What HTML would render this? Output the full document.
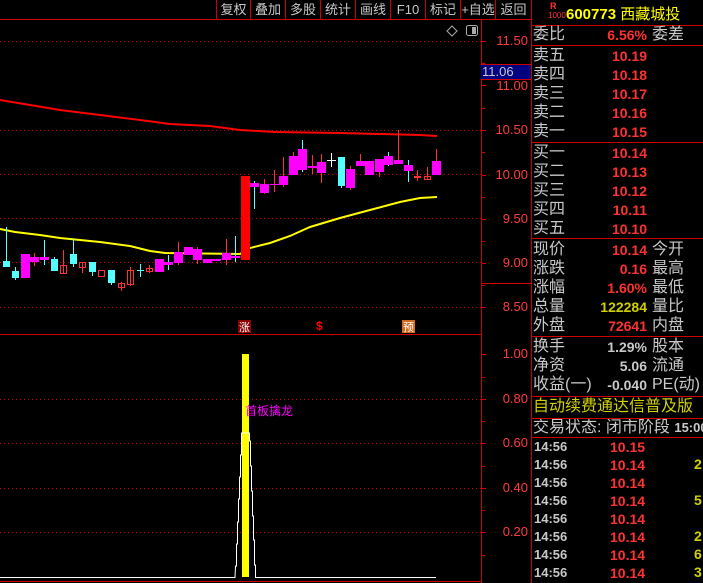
<!DOCTYPE html>
<html><head><meta charset="utf-8"><style>
*{margin:0;padding:0;box-sizing:border-box}
body{width:703px;height:583px;background:#000;overflow:hidden;position:relative;font-family:"Liberation Sans","Noto Sans CJK SC",sans-serif}
.a{position:absolute;white-space:nowrap}
.btn{position:absolute;top:0;height:19px;color:#c8c8c8;font-size:13px;line-height:19px;text-align:center;border-left:1px solid #c00}
.ax{position:absolute;right:175px;color:#ff3c3c;font-size:13px;line-height:14px}
.r{position:absolute;left:533px;font-size:16px;line-height:18px;color:#c8c8c8;white-space:nowrap}
.v{position:absolute;right:56px;font-size:14px;line-height:18px;color:#ff3232;font-weight:bold;text-align:right;white-space:nowrap}
.l2{position:absolute;left:652px;font-size:16px;line-height:18px;color:#c8c8c8;white-space:nowrap}
.hl{position:absolute;left:531px;width:172px;height:1px;background:#c00}
.t{position:absolute;left:534px;font-size:13px;font-weight:bold;color:#c8c8c8;line-height:18px}
.tv{position:absolute;left:610px;font-size:14px;font-weight:bold;color:#ff3232;line-height:18px}
</style></head><body>
<svg class="a" style="left:0;top:0" width="703" height="583">
<g stroke="#c00" stroke-width="1" fill="none">
<line x1="0" y1="19.5" x2="531" y2="19.5"/>
<line x1="481.5" y1="20" x2="481.5" y2="583"/>
<line x1="531.5" y1="0" x2="531.5" y2="583"/>
<line x1="0" y1="334.5" x2="481" y2="334.5"/>
<line x1="481" y1="283.5" x2="531" y2="283.5"/>
<line x1="0" y1="581.5" x2="481" y2="581.5"/>
<g stroke-dasharray="1,3">
<line x1="0" y1="41.5" x2="481" y2="41.5"/><line x1="0" y1="130.5" x2="481" y2="130.5"/>
<line x1="0" y1="174.5" x2="481" y2="174.5"/><line x1="0" y1="218.5" x2="481" y2="218.5"/>
<line x1="0" y1="262.5" x2="481" y2="262.5"/><line x1="0" y1="307.5" x2="481" y2="307.5"/>
<line x1="0" y1="399.5" x2="481" y2="399.5"/><line x1="0" y1="443.5" x2="481" y2="443.5"/>
<line x1="0" y1="488.5" x2="481" y2="488.5"/><line x1="0" y1="532.5" x2="481" y2="532.5"/>
</g>
<path d="M482 41.5h4M482 63.5h3M482 85.5h4M482 108.5h3M482 130.5h4M482 152.5h3M482 175.5h4M482 197.5h3M482 219.5h4M482 241.5h3M482 263.5h4M482 285.5h3M482 307.5h4M482 354.5h4M482 377.5h3M482 399.5h4M482 421.5h3M482 443.5h4M482 466.5h3M482 488.5h4M482 510.5h3M482 532.5h4M482 555.5h3"/>
</g>
<polyline fill="none" stroke="#f00" stroke-width="2" points="0,100 60,110 140,120 170,124 210,126 240,130 275,132 340,133 380,134 420,135 437,136"/>
<polyline fill="none" stroke="#ff0" stroke-width="2" points="0,229 15,232 40,235 60,238 100,242 130,246 150,251 165,253 240,254 250,248 270,243 290,236 310,227 340,218 370,210 400,202 420,198 437,197"/>
<g stroke-width="1">
<g stroke="#55ffff"><line x1="6.5" y1="227" x2="6.5" y2="267"/><line x1="15.5" y1="267" x2="15.5" y2="280"/><line x1="44.5" y1="240" x2="44.5" y2="265"/><line x1="54.5" y1="257" x2="54.5" y2="271"/><line x1="73.5" y1="239" x2="73.5" y2="267"/><line x1="92.5" y1="262" x2="92.5" y2="276"/><line x1="111.5" y1="270" x2="111.5" y2="285"/><line x1="140.5" y1="264" x2="140.5" y2="277"/><line x1="168.5" y1="255" x2="168.5" y2="270"/><line x1="235.5" y1="236" x2="235.5" y2="262"/><line x1="254.5" y1="181" x2="254.5" y2="209"/><line x1="302.5" y1="140" x2="302.5" y2="172"/><line x1="341.5" y1="157" x2="341.5" y2="188"/><line x1="388.5" y1="152" x2="388.5" y2="166"/><line x1="408.5" y1="160" x2="408.5" y2="182"/></g>
<g stroke="#ff3232"><line x1="34.5" y1="253" x2="34.5" y2="266"/><line x1="63.5" y1="250" x2="63.5" y2="274"/><line x1="82.5" y1="262" x2="82.5" y2="273"/><line x1="121.5" y1="282" x2="121.5" y2="291"/><line x1="130.5" y1="267" x2="130.5" y2="286"/><line x1="149.5" y1="265" x2="149.5" y2="273"/><line x1="178.5" y1="242" x2="178.5" y2="265"/><line x1="197.5" y1="247" x2="197.5" y2="264"/><line x1="226.5" y1="239" x2="226.5" y2="265"/><line x1="264.5" y1="179" x2="264.5" y2="194"/><line x1="274.5" y1="170" x2="274.5" y2="192"/><line x1="283.5" y1="157" x2="283.5" y2="187"/><line x1="293.5" y1="152" x2="293.5" y2="175"/><line x1="312.5" y1="155" x2="312.5" y2="174"/><line x1="321.5" y1="154" x2="321.5" y2="183"/><line x1="350.5" y1="166" x2="350.5" y2="190"/><line x1="360.5" y1="154" x2="360.5" y2="166"/><line x1="379.5" y1="159" x2="379.5" y2="177"/><line x1="398.5" y1="130" x2="398.5" y2="164"/><line x1="417.5" y1="170" x2="417.5" y2="181"/><line x1="427.5" y1="167" x2="427.5" y2="179"/><line x1="436.5" y1="149" x2="436.5" y2="175"/></g>
<line x1="331.5" y1="153" x2="331.5" y2="167" stroke="#fff"/><line x1="327" y1="160.5" x2="336" y2="160.5" stroke="#fff"/>
</g>
<g fill="#55ffff"><rect x="3" y="261" width="7" height="6"/><rect x="12" y="271" width="7" height="7"/><rect x="51" y="259" width="7" height="12"/><rect x="70" y="254" width="7" height="10"/><rect x="89" y="262" width="7" height="10"/><rect x="108" y="270" width="7" height="13"/><rect x="137" y="270" width="7" height="1"/><rect x="338" y="157" width="7" height="29"/></g>
<g fill="none" stroke="#ff3232"><rect x="60.5" y="265.5" width="6" height="8"/><rect x="79.5" y="262.5" width="6" height="5"/><rect x="98.5" y="270.5" width="6" height="6"/><rect x="118.5" y="283.5" width="6" height="4"/><rect x="127.5" y="270.5" width="6" height="14"/><rect x="146.5" y="268.5" width="6" height="3"/><rect x="424.5" y="176.5" width="6" height="3"/></g>
<rect x="414" y="176" width="7" height="2" fill="#ff3232"/>
<g fill="#ff00ff"><rect x="21" y="254" width="9" height="24"/><rect x="30" y="257" width="9" height="5"/><rect x="40" y="257" width="9" height="3"/><rect x="155" y="259" width="9" height="13"/><rect x="164" y="262" width="9" height="3"/><rect x="174" y="252" width="9" height="11"/><rect x="184" y="247" width="9" height="8"/><rect x="193" y="249" width="9" height="11"/><rect x="203" y="259" width="9" height="4"/><rect x="212" y="259" width="9" height="2"/><rect x="222" y="253" width="9" height="7"/><rect x="231" y="256" width="9" height="2"/><rect x="250" y="183" width="9" height="4"/><rect x="260" y="184" width="9" height="9"/><rect x="270" y="184" width="9" height="1"/><rect x="279" y="176" width="9" height="9"/><rect x="289" y="156" width="9" height="19"/><rect x="298" y="149" width="9" height="21"/><rect x="308" y="166" width="9" height="2"/><rect x="317" y="162" width="9" height="11"/><rect x="346" y="169" width="9" height="19"/><rect x="356" y="161" width="9" height="5"/><rect x="365" y="161" width="9" height="14"/><rect x="375" y="159" width="9" height="13"/><rect x="384" y="156" width="9" height="9"/><rect x="394" y="160" width="9" height="4"/><rect x="404" y="165" width="9" height="6"/><rect x="432" y="161" width="9" height="14"/></g>
<rect x="241" y="176" width="9" height="84" fill="#f00"/>
<rect x="238" y="320" width="13" height="13" fill="#8b0000"/>
<rect x="402" y="320" width="13" height="13" fill="#d2691e"/>
<rect x="242" y="354" width="7" height="223" fill="#ff0"/>
<polyline fill="none" stroke="#fff" stroke-width="1" points="0,577.5 235,577.5 235.5,566 236.5,566 236.5,544 237.5,544 237.5,522 238.5,522 238.5,499 239.5,499 239.5,477 240.5,477 240.5,455 241.5,455 241.5,433 249.5,433 249.5,441 250.5,441 250.5,466 251.5,466 251.5,491 252.5,491 252.5,516 253.5,516 253.5,540 254.5,540 254.5,565 255.5,565 255.5,577.5 436,577.5"/>
<path d="M452 26l5 5-5 5-5-5z" fill="none" stroke="#aaa"/>
<rect x="466.5" y="25.5" width="11" height="10" rx="2" fill="none" stroke="#aaa"/><rect x="472" y="27" width="4" height="7" fill="#aaa"/>
<g stroke="#c00"><line x1="531" y1="25.5" x2="703" y2="25.5"/></g>
</svg>
<div class="a" style="left:239px;top:319px;font-size:11px;color:#fff">涨</div>
<div class="a" style="left:316px;top:319px;font-size:12px;color:#f00;font-weight:bold">$</div>
<div class="a" style="left:403px;top:319px;font-size:11px;color:#fff">预</div>
<div class="a" style="left:245px;top:402px;font-size:12px;color:#ff00ff">首板擒龙</div>
<div class="btn" style="left:216px;width:34px">复权</div><div class="btn" style="left:250px;width:35px">叠加</div><div class="btn" style="left:285px;width:35px">多股</div><div class="btn" style="left:320px;width:35px">统计</div><div class="btn" style="left:355px;width:35px">画线</div><div class="btn" style="left:390px;width:35px">F10</div><div class="btn" style="left:425px;width:35px">标记</div><div class="btn" style="left:460px;width:35px">+自选</div><div class="btn" style="left:495px;width:36px">返回</div>
<div class="ax" style="top:34px">11.50</div><div class="ax" style="top:79px">11.00</div><div class="ax" style="top:123px">10.50</div><div class="ax" style="top:168px">10.00</div><div class="ax" style="top:212px">9.50</div><div class="ax" style="top:256px">9.00</div><div class="ax" style="top:300px">8.50</div>
<div class="ax" style="top:347px">1.00</div><div class="ax" style="top:392px">0.80</div><div class="ax" style="top:436px">0.60</div><div class="ax" style="top:481px">0.40</div><div class="ax" style="top:525px">0.20</div>
<div class="a" style="left:481px;top:64px;width:50px;height:16px;background:#000080;border-top:1px solid #c00;border-bottom:1px solid #c00;color:#c8c8c8;font-size:13px;line-height:14px;padding-left:1px">11.06</div>
<div class="a" style="left:550px;top:1px;font-size:9px;color:#ff3232;font-weight:bold">R</div>
<div class="a" style="left:548px;top:11px;font-size:8px;color:#ff3232">1000</div>
<div class="a" style="left:566px;top:3px;font-size:15px;color:#ff0;font-weight:bold">600773 <span style="font-weight:normal">西藏城投</span></div>
<div class="r" style="top:26px">委比</div><div class="v" style="top:26px">6.56%</div><div class="l2" style="top:26px">委差</div>
<div class="hl" style="top:45px"></div>
<div class="r" style="top:47px">卖五</div><div class="v" style="top:47px">10.19</div>
<div class="r" style="top:66px">卖四</div><div class="v" style="top:66px">10.18</div>
<div class="r" style="top:85px">卖三</div><div class="v" style="top:85px">10.17</div>
<div class="r" style="top:104px">卖二</div><div class="v" style="top:104px">10.16</div>
<div class="r" style="top:123px">卖一</div><div class="v" style="top:123px">10.15</div>
<div class="hl" style="top:142px"></div>
<div class="r" style="top:144px">买一</div><div class="v" style="top:144px">10.14</div>
<div class="r" style="top:163px">买二</div><div class="v" style="top:163px">10.13</div>
<div class="r" style="top:182px">买三</div><div class="v" style="top:182px">10.12</div>
<div class="r" style="top:201px">买四</div><div class="v" style="top:201px">10.11</div>
<div class="r" style="top:220px">买五</div><div class="v" style="top:220px">10.10</div>
<div class="hl" style="top:238px"></div>
<div class="r" style="top:241px">现价</div><div class="v" style="top:241px">10.14</div><div class="l2" style="top:241px">今开</div>
<div class="r" style="top:260px">涨跌</div><div class="v" style="top:260px">0.16</div><div class="l2" style="top:260px">最高</div>
<div class="r" style="top:279px">涨幅</div><div class="v" style="top:279px">1.60%</div><div class="l2" style="top:279px">最低</div>
<div class="r" style="top:298px">总量</div><div class="v" style="top:298px;color:#d0d000">122284</div><div class="l2" style="top:298px">量比</div>
<div class="r" style="top:317px">外盘</div><div class="v" style="top:317px">72641</div><div class="l2" style="top:317px">内盘</div>
<div class="hl" style="top:336px"></div>
<div class="r" style="top:338px">换手</div><div class="v" style="top:338px;color:#c8c8c8">1.29%</div><div class="l2" style="top:338px">股本</div>
<div class="r" style="top:357px">净资</div><div class="v" style="top:357px;color:#c8c8c8">5.06</div><div class="l2" style="top:357px">流通</div>
<div class="r" style="top:376px">收益(一)</div><div class="v" style="top:376px;color:#c8c8c8">-0.040</div><div class="l2" style="top:376px">PE(动)</div>
<div class="hl" style="top:396px"></div>
<div class="r" style="top:398px;color:#d0d000">自动续费通达信普及版</div>
<div class="hl" style="top:418px"></div>
<div class="r" style="top:419px;width:170px;overflow:hidden">交易状态: 闭市阶段 <b style="font-size:13px">15:00</b></div>
<div class="hl" style="top:437px"></div>
<div class="t" style="top:438px">14:56</div><div class="tv" style="top:438px">10.15</div>
<div class="t" style="top:456px">14:56</div><div class="tv" style="top:456px">10.14</div><div class="a" style="left:694px;top:456px;color:#d0d000;font-weight:bold;font-size:14px">2</div>
<div class="t" style="top:474px">14:56</div><div class="tv" style="top:474px">10.14</div>
<div class="t" style="top:492px">14:56</div><div class="tv" style="top:492px">10.14</div><div class="a" style="left:694px;top:492px;color:#d0d000;font-weight:bold;font-size:14px">5</div>
<div class="t" style="top:510px">14:56</div><div class="tv" style="top:510px">10.14</div>
<div class="t" style="top:528px">14:56</div><div class="tv" style="top:528px">10.14</div><div class="a" style="left:694px;top:528px;color:#d0d000;font-weight:bold;font-size:14px">2</div>
<div class="t" style="top:546px">14:56</div><div class="tv" style="top:546px">10.14</div><div class="a" style="left:694px;top:546px;color:#d0d000;font-weight:bold;font-size:14px">6</div>
<div class="t" style="top:564px">14:56</div><div class="tv" style="top:564px">10.14</div><div class="a" style="left:694px;top:564px;color:#d0d000;font-weight:bold;font-size:14px">3</div>
</body></html>
